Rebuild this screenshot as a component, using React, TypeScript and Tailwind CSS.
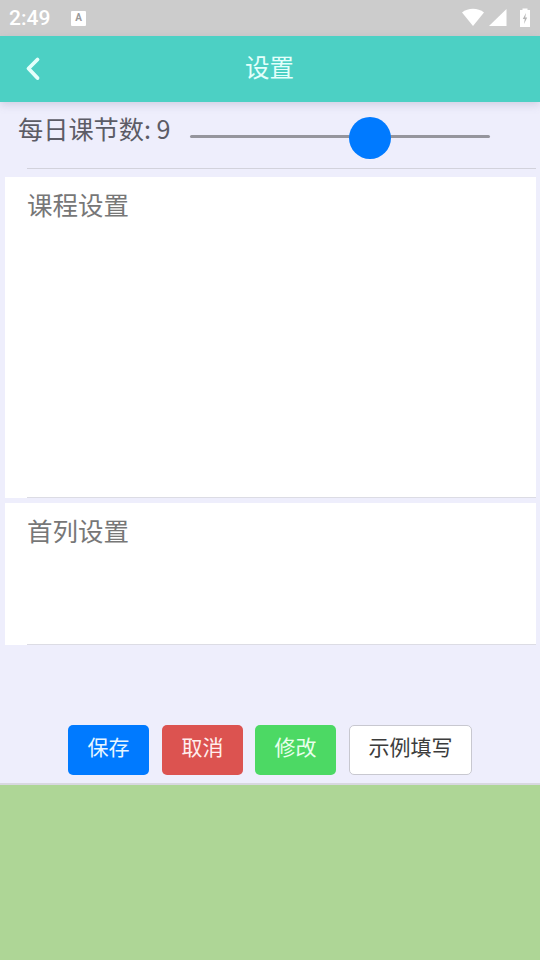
import React from "react";

const cjk = "font-['Noto_Sans_CJK_SC',sans-serif]";

// status bar icons are drawn by hand, they are Android system glyphs
const StatusBar = () => (
  <div className="h-[36px] bg-[#cccccc] flex items-center pl-[9px] pr-[9px] text-white shrink-0">
    <span className="font-['Roboto',sans-serif] text-[21px] font-medium leading-none w-[62px]">2:49</span>
    <div className="w-[15px] h-[15px] bg-white rounded-[1px] flex items-center justify-center">
      <span className="font-['Roboto',sans-serif] text-[10px] font-bold leading-none text-[#9a9a9a]">A</span>
    </div>
    <div className="ml-auto flex items-center">
      <svg width="24" height="20" viewBox="0 0 24 20">
        <path d="M1 4.500 C7 -0.500 17 -0.500 23 4.500 L12 18 Z" fill="#fff" />
      </svg>
      <svg width="20" height="20" viewBox="0 0 20 20" className="ml-[3px]">
        <path d="M1 18 L18.500 1 V18 Z" fill="#fff" />
      </svg>
      <svg width="12" height="20" viewBox="0 0 12 20" className="ml-[11px]">
        <path d="M3.500 0.500 H8.500 V2 H11 V19 H1 V2 H3.500 Z" fill="#fff" />
        <path d="M7 5 L3.800 11 H5.800 L5 16 L8.200 9.500 H6.200 Z" fill="#b5b5b5" />
      </svg>
    </div>
  </div>
);

const Header = () => (
  <div className="relative h-[66px] bg-[#4cd0c4] flex items-center justify-center shrink-0 shadow-[0_3px_8px_rgba(120,120,160,0.25)]">
    <svg width="20" height="28" viewBox="0 0 20 28" className="absolute left-[22px] top-[19px]">
      <path d="M15.500 4.500 L6.500 13.500 L15.500 23" fill="none" stroke="#e4fffb" strokeWidth="3.800" strokeLinecap="round" strokeLinejoin="round" />
    </svg>
    <span className={`${cjk} text-[24.500px] leading-none text-[#e4fffb] -mt-[3px] -ml-px`}>设置</span>
  </div>
);

const Slider = () => (
  <div className="relative w-[300px] h-[42px] ml-[19px] flex items-center">
    <div className="w-full h-[3px] bg-[#95959d] rounded-full -mt-[4px]" />
    <div className="absolute left-[159px] top-0 w-[42px] h-[42px] rounded-full bg-[#007aff]" />
  </div>
);

const Section = ({ title, height }: { title: string; height: string }) => (
  <div className={`relative ml-[5px] w-[531px] bg-white ${height}`}>
    <div className={`${cjk} pl-[23px] pt-[9px] text-[25.500px] leading-[36px] text-[#777777] -ml-px`}>{title}</div>
    <div className="absolute left-[22px] right-0 bottom-0 h-px bg-[#dcdce4]" />
  </div>
);

const Btn = ({ label, className }: { label: string; className: string }) => (
  <button className={`${cjk} h-[50px] rounded-[5px] text-[21px] leading-none pb-[7px] ${className}`}>{label}</button>
);

export default function App() {
  return (
    <div className="w-[540px] h-[960px] flex flex-col bg-[#eeeefc] overflow-hidden">
      <StatusBar />
      <Header />
      <div className="h-[66px] flex items-center shrink-0 pl-[18px] pt-[6px]">
        <span className={`${cjk} text-[25.200px] leading-none text-[#5c5c66] -mt-[18px] w-[153px] whitespace-nowrap`}>每日课节数: 9</span>
        <Slider />
      </div>
      <div className="ml-[27px] w-[509px] h-px bg-[#d2d2dc] shrink-0" />
      <div className="h-[8px] shrink-0" />
      <Section title="课程设置" height="h-[321px]" />
      <div className="h-[5px] shrink-0" />
      <Section title="首列设置" height="h-[142px]" />
      <div className="flex pl-[68px] pt-[80px] shrink-0">
        <Btn label="保存" className="w-[81px] bg-[#007aff] text-[#e8f6ff]" />
        <Btn label="取消" className="w-[81px] ml-[13px] bg-[#dc5350] text-[#ffeeee]" />
        <Btn label="修改" className="w-[81px] ml-[12px] bg-[#4cd964] text-[#e8ffec]" />
        <Btn label="示例填写" className="w-[123px] ml-[13px] bg-white text-[#3c3c3c] border border-[#c8c8d0]" />
      </div>
      <div className="h-[8px] shrink-0" />
      <div className="h-[2px] bg-[#d8d8e0] shrink-0" />
      <div className="flex-1 bg-[#aed696]" />
    </div>
  );
}
